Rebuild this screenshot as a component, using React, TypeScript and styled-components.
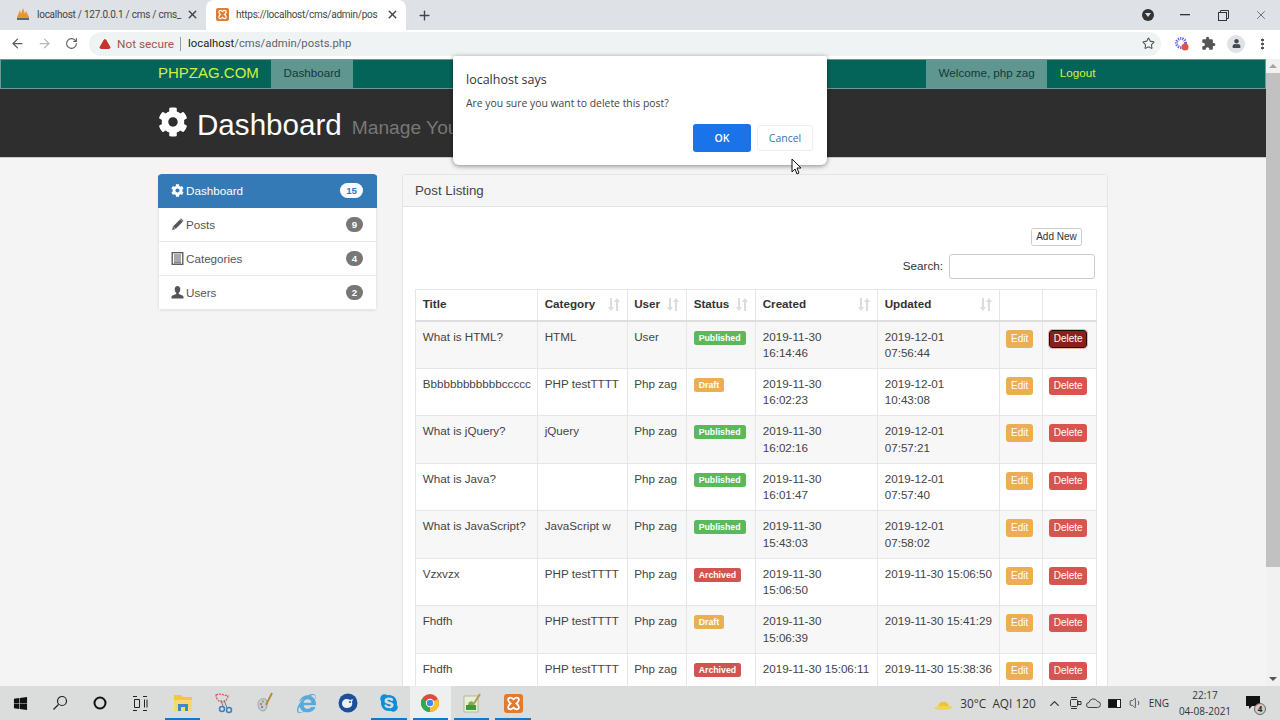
import styled, { createGlobalStyle } from "styled-components";
import { ArrowLeft, ArrowRight, RotateCw, Star, Plus, X, TriangleAlert, ChevronUp, Volume1 } from "lucide-react";
import { FaCog, FaInternetExplorer, FaSkype, FaWindows, FaUser } from "react-icons/fa";
import { MdExtension } from "react-icons/md";

const GlobalStyle = createGlobalStyle`
  html, body { margin: 0; padding: 0; height: 100%; overflow: hidden; }
  * { box-sizing: border-box; }
  body { font-family: "Liberation Sans", Arial, sans-serif; color: #333; }
`;

const uiFont = `"Open Sans", "Noto Sans", sans-serif`;
const chromeFont = `Roboto, "Open Sans", sans-serif`;

const Screen = styled.div`
  position: relative;
  width: 1280px;
  height: 720px;
  display: flex;
  flex-direction: column;
  overflow: hidden;
  background: #fff;
`;

/* browser chrome */
const TabStrip = styled.div`
  height: 30px;
  flex: none;
  display: flex;
  align-items: stretch;
  background: #dee1e6;
  font-family: ${chromeFont};
  font-size: 10px;
  letter-spacing: -0.25px;
  color: #444;
`;

const Tab = styled.div<{ $active?: boolean }>`
  width: ${(p) => (p.$active ? "200px" : "206px")};
  display: flex;
  align-items: center;
  gap: 7px;
  padding: 0 7px 2px ${(p) => (p.$active ? "10px" : "16px")};
  background: ${(p) => (p.$active ? "#fff" : "transparent")};
  border-radius: 8px 8px 0 0;
  & > svg { flex: none; }
`;

const TabTitle = styled.span`
  flex: 1;
  min-width: 0;
  white-space: nowrap;
`;

const NewTab = styled.div`
  width: 36px;
  display: flex;
  align-items: center;
  justify-content: center;
  color: #444;
`;

const WindowControls = styled.div`
  margin-left: auto;
  display: flex;
  align-items: center;
  color: #444;
`;

const ProfileDot = styled.div`
  width: 12px;
  height: 12px;
  margin-right: 12px;
  border-radius: 50%;
  background: #333;
  display: flex;
  align-items: center;
  justify-content: center;
  &::after {
    content: "";
    border-left: 3px solid transparent;
    border-right: 3px solid transparent;
    border-top: 4px solid #dee1e6;
  }
`;

const WinButton = styled.div`
  width: 38px;
  height: 26px;
  display: flex;
  align-items: center;
  justify-content: center;
`;

const Toolbar = styled.div`
  height: 29px;
  flex: none;
  display: flex;
  align-items: center;
  padding: 0 0 2px 10px;
  background: #fff;
  color: #555;
`;

const NavIcon = styled.div<{ $dim?: boolean }>`
  width: 27px;
  display: flex;
  justify-content: flex-start;
  color: ${(p) => (p.$dim ? "#b5b8bc" : "#5a5d60")};
`;

const ReloadIcon = styled(NavIcon)`
  margin-left: 1px;
  width: 25px;
`;

const UrlPill = styled.div`
  width: 1072px;
  height: 24px;
  margin-left: -1px;
  padding: 0 6px 0 10px;
  display: flex;
  align-items: center;
  border-radius: 12px;
  background: #f0f3f3;
  font-family: ${chromeFont};
  font-size: 11.3px;
  color: #5f6368;
`;

const NotSecure = styled.span`
  margin-left: 6px;
  font-size: 11.8px;
  color: #a8524e;
`;

const UrlBar = styled.span`
  width: 1px;
  height: 14px;
  margin: 0 7px 0 6px;
  background: #999;
`;

const UrlHost = styled.span`
  color: #222;
`;

const PillStar = styled.div`
  margin-left: auto;
  display: flex;
  color: #555;
`;

const ExtIcons = styled.div`
  display: flex;
  align-items: center;
  margin-left: 14px;
  gap: 11.5px;
`;

const Avatar = styled.div`
  width: 18px;
  height: 18px;
  border-radius: 50%;
  background: #dfe3e8;
  display: flex;
  align-items: center;
  justify-content: center;
  color: #45484c;
`;

const Kebab = styled.div`
  margin-left: 16px;
  width: 3px;
  height: 12px;
  background: radial-gradient(circle, #555 1.4px, transparent 1.6px) 0 0 / 3px 4px;
`;

/* page */
const Viewport = styled.div`
  flex: 1;
  min-height: 0;
  display: flex;
`;

const Page = styled.div`
  flex: 1;
  min-width: 0;
  overflow: hidden;
  background: #f4f4f4;
`;

const Scrollbar = styled.div`
  width: 14px;
  flex: none;
  display: flex;
  flex-direction: column;
  background: #f1f1f1;
`;

const ScrollArrow = styled.div<{ $down?: boolean }>`
  height: 14px;
  display: flex;
  align-items: center;
  justify-content: center;
  &::after {
    content: "";
    border-left: 4px solid transparent;
    border-right: 4px solid transparent;
    ${(p) => (p.$down ? "border-top: 4px solid #555;" : "border-bottom: 4px solid #a3a3a3;")}
  }
`;

const ScrollThumb = styled.div`
  height: 494px;
  background: #c1c1c1;
`;

const ScrollGap = styled.div`
  flex: 1;
`;

const NavBar = styled.div`
  height: 30px;
  padding-left: 157px;
  display: flex;
  background: #05645a;
  border: 1px solid #6d9a94;
  font-size: 11.67px;
`;

const Brand = styled.div`
  width: 113px;
  line-height: 26px;
  font-size: 15px;
  color: #cdf23f;
`;

const NavItem = styled.div<{ $active?: boolean; $push?: boolean }>`
  padding: 0 12.5px;
  line-height: 26px;
  margin-left: ${(p) => (p.$push ? "auto" : "0")};
  background: ${(p) => (p.$active ? "#5f9690" : "transparent")};
  color: ${(p) => (p.$active ? "#123a36" : "#cdf23f")};
`;

const NavEnd = styled.div`
  width: 157px;
`;

const Hero = styled.div`
  height: 69px;
  padding: 0 0 2px 158px;
  display: flex;
  align-items: center;
  background: #2e2e2e;
  border-bottom: 1px solid #c9c9c9;
  color: #fff;
`;

const HeroTitle = styled.h1`
  margin: 5px 0 0 9px;
  font-weight: 400;
  font-size: 29.6px;
`;

const HeroSub = styled.span`
  margin: 12px 0 0 10px;
  font-size: 19.2px;
  color: #777;
`;

const Content = styled.div`
  padding: 16px 0 0 158px;
  display: flex;
  align-items: flex-start;
  gap: 25px;
`;

const SideList = styled.div`
  width: 219px;
  border-radius: 4px;
  background: #fff;
  overflow: hidden;
  box-shadow: 0 1px 2px rgba(0, 0, 0, 0.08);
`;

const SideItem = styled.div<{ $active?: boolean }>`
  height: 34px;
  padding: 0 13px 0 12px;
  display: flex;
  align-items: center;
  gap: 2px;
  font-size: 11.67px;
  background: ${(p) => (p.$active ? "#337ab7" : "#fff")};
  color: ${(p) => (p.$active ? "#fff" : "#555")};
  border: 1px solid ${(p) => (p.$active ? "#337ab7" : "#e8e8e8")};
  border-width: 0 1px 1px 1px;
`;

const Count = styled.span<{ $active?: boolean }>`
  margin-left: auto;
  min-width: 17px;
  height: 15px;
  padding: 0 ${(p) => (p.$active ? "6px" : "4px")};
  border-radius: 8px;
  text-align: center;
  line-height: 15px;
  font-size: 9.7px;
  font-weight: 700;
  background: ${(p) => (p.$active ? "#fff" : "#777")};
  color: ${(p) => (p.$active ? "#337ab7" : "#fff")};
`;

const Panel = styled.div`
  width: 706px;
  height: 800px;
  background: #fff;
  border: 1px solid #e4e4e4;
  border-radius: 3px;
`;

const PanelHeading = styled.div`
  height: 32px;
  padding-left: 12px;
  display: flex;
  align-items: center;
  background: #f5f5f5;
  border-bottom: 1px solid #e2e2e2;
  font-size: 13.3px;
  color: #444;
`;

const PanelBody = styled.div`
  padding: 21px 12px 0 12px;
`;

const AddRow = styled.div`
  padding-right: 13px;
  display: flex;
  justify-content: flex-end;
`;

const AddButton = styled.div`
  width: 51px;
  height: 18px;
  line-height: 16px;
  text-align: center;
  border: 1px solid #ccc;
  border-radius: 2.5px;
  background: #fff;
  font-size: 10px;
`;

const SearchRow = styled.div`
  margin-top: 8px;
  display: flex;
  justify-content: flex-end;
  align-items: center;
  gap: 6px;
  font-size: 11.67px;
`;

const SearchLabel = styled.span`
  margin-bottom: 3px;
`;

const SearchInput = styled.input`
  width: 146px;
  height: 25px;
  border: 1px solid #ccc;
  border-radius: 3px;
  background: #fff;
`;

const Table = styled.table`
  width: 681px;
  margin-top: 10px;
  table-layout: fixed;
  border-collapse: collapse;
  font-size: 11.67px;
  line-height: 16.67px;
`;

const Th = styled.th`
  height: 31px;
  padding: 0 7px 0 6.7px;
  border: 1px solid #e6e6e6;
  border-bottom: 2px solid #ddd;
  text-align: left;
  vertical-align: middle;
`;

const ThInner = styled.div`
  display: flex;
  align-items: center;
  justify-content: space-between;
`;

const Td = styled.td`
  height: 47.5px;
  padding: 7.3px 6.7px 5.3px 6.7px;
  border: 1px solid #e6e6e6;
  vertical-align: top;
  white-space: pre;
  color: #444;
`;

const Tr = styled.tr<{ $striped: boolean }>`
  background: ${(p) => (p.$striped ? "#f7f7f7" : "#fff")};
`;

const labelColors: Record<string, string> = {
  Published: "#5cb85c",
  Draft: "#ebae52",
  Archived: "#d05450",
};

const Label = styled.span<{ $kind: string }>`
  display: inline-block;
  height: 14px;
  padding: 0 5px;
  margin-top: 2px;
  border-radius: 2.5px;
  line-height: 14px;
  vertical-align: top;
  font-size: 8.75px;
  font-weight: 700;
  color: #fff;
  background: ${(p) => labelColors[p.$kind]};
`;

const ActionButton = styled.div<{ $kind: "edit" | "delete"; $focused?: boolean }>`
  height: 18px;
  width: ${(p) => (p.$kind === "edit" ? "27px" : "38px")};
  margin-top: 1px;
  border-radius: 3px;
  text-align: center;
  line-height: 18px;
  font-size: 10px;
  color: #fff;
  background: ${(p) => (p.$focused ? "#8c1f1c" : p.$kind === "edit" ? "#ebae52" : "#d9534f")};
  ${(p) => p.$focused && "border: 1px solid #111; line-height: 16px; outline: 1px solid #e2b4b2;"}
`;

/* alert dialog */
const Dialog = styled.div`
  position: absolute;
  left: 453px;
  top: 56px;
  width: 374px;
  height: 109px;
  padding: 15px 14px 0 13px;
  background: #fff;
  border-radius: 2px 2px 6px 6px;
  box-shadow: 0 1px 5px rgba(0, 0, 0, 0.45);
  font-family: ${uiFont};
  color: #444;
`;

const DialogTitle = styled.div`
  font-size: 12.5px;
  line-height: 17px;
  color: #333;
`;

const DialogText = styled.div`
  margin-top: 8px;
  font-size: 10.4px;
  line-height: 15px;
`;

const DialogButtons = styled.div`
  margin-top: 13px;
  display: flex;
  justify-content: flex-end;
  align-items: center;
  gap: 6px;
`;

const OkButton = styled.div`
  width: 58px;
  height: 28px;
  border-radius: 3px;
  background: #1a73e8;
  color: #fff;
  text-align: center;
  line-height: 28px;
  font-size: 10.5px;
  font-weight: 600;
`;

const CancelButton = styled.div`
  width: 56px;
  height: 26px;
  border: 1px solid #eee;
  border-radius: 3px;
  color: #3f6fb3;
  text-align: center;
  line-height: 24px;
  font-size: 10.5px;
`;

const Cursor = styled.svg`
  position: absolute;
  left: 791px;
  top: 158px;
`;

/* taskbar */
const Taskbar = styled.div`
  height: 34px;
  flex: none;
  display: flex;
  align-items: stretch;
  background: #dadddc;
  font-family: ${uiFont};
  color: #222;
`;

const ShellSlot = styled.div`
  width: 40px;
  display: flex;
  align-items: center;
  justify-content: center;
`;

const AppGroup = styled.div`
  margin-left: 2px;
  display: flex;
`;

const AppSlot = styled.div<{ $open?: boolean; $active?: boolean }>`
  position: relative;
  width: 41.3px;
  display: flex;
  align-items: center;
  justify-content: center;
  background: ${(p) => (p.$active ? "#eef0f0" : "transparent")};
  &::after {
    content: "";
    display: ${(p) => (p.$open ? "block" : "none")};
    position: absolute;
    left: 3px;
    right: 3px;
    bottom: 0;
    height: 2px;
    background: #0f78c8;
  }
`;

const Tray = styled.div`
  margin-left: auto;
  padding-right: 5px;
  display: flex;
  align-items: center;
  font-size: 12px;
`;

const Weather = styled.span`
  margin-left: 5px;
  font-size: 11.8px;
  color: #333;
`;

const TrayIcon = styled.div<{ $gap: number }>`
  display: flex;
  margin-left: ${(p) => p.$gap}px;
  color: #333;
`;

const Lang = styled.span`
  margin-left: 6px;
  font-size: 10px;
  color: #333;
`;

const Clock = styled.div`
  width: 56px;
  margin-left: 8px;
  text-align: center;
  font-size: 10px;
  line-height: 16px;
  color: #333;
`;

const NotifyWrap = styled.div`
  position: relative;
  align-self: stretch;
  width: 42px;
  display: flex;
  align-items: center;
  justify-content: center;
`;

const NotifyBadge = styled.span`
  position: absolute;
  left: 21px;
  top: 17px;
  width: 12px;
  height: 12px;
  border-radius: 50%;
  border: 1px solid #666;
  background: #ccc;
  text-align: center;
  line-height: 10px;
  font-size: 8px;
  font-weight: 700;
  color: #222;
`;

const GearIcon = () => <FaCog size={13} />;

const PencilIcon = () => (
  <svg width="13" height="13" viewBox="0 0 13 13">
    <path d="M9 1.500 11.500 4 4.500 11 1 12 2 8.500z" fill="#555" />
    <path d="M2 8.500 4.500 11" stroke="#fff" strokeWidth=".6" />
    <path d="M10 .5 12.500 3l-.8.8L9.200 1.300z" fill="#555" />
  </svg>
);

const ListIcon = () => (
  <svg width="13" height="13" viewBox="0 0 12 13" fill="none">
    <rect x=".7" y=".7" width="10.600" height="11.600" stroke="#555" strokeWidth="1.300" />
    <path d="M2.500 3h7M2.500 5h7M2.500 7h7M2.500 9h7M2.500 10.800h7" stroke="#555" />
  </svg>
);

const BustIcon = () => (
  <svg width="13" height="13" viewBox="0 0 13 13">
    <path d="M6.500 0C4.700 0 3.700 1.300 3.700 3.200c0 1.500.7 3 1.500 3.600V8L1.500 9.500C.8 9.800.5 10.300.5 11v1.500h12V11c0-.7-.3-1.200-1-1.500L7.800 8V6.800c.8-.6 1.500-2.100 1.500-3.600C9.300 1.300 8.300 0 6.500 0z" fill="#555" />
  </svg>
);

const SortArrows = () => (
  <svg width="12" height="13" viewBox="0 0 12 13" fill="#dcdcdc">
    <path d="M2 0h2v9h2L3 13 0 9h2z" />
    <path d="M8 13h2V4h2L9 0 6 4h2z" />
  </svg>
);

const RestoreIcon = () => (
  <svg width="11" height="11" viewBox="0 0 11 11" fill="none" stroke="#333">
    <rect x=".5" y="2.500" width="8" height="8" />
    <path d="M2.500 2.500v-2h8v8h-2" />
  </svg>
);

const MinimizeIcon = () => (
  <svg width="10" height="2" viewBox="0 0 10 2">
    <rect width="10" height="1.300" fill="#333" />
  </svg>
);

const XamppIcon = ({ size }: { size: number }) => (
  <svg width={size} height={size} viewBox="0 0 16 16">
    <rect width="16" height="16" rx="2.500" fill="#e07b33" />
    <path d="M4 3.500c1.500-1 3 0 4 1 1-1 2.500-2 4-1 1 1 .5 3-1.500 4.500 2 1.500 2.500 3.500 1.500 4.500-1.500 1-3 0-4-1-1 1-2.500 2-4 1-1-1-.5-3 1.500-4.500C3.500 6.500 3 4.500 4 3.500z" fill="none" stroke="#fff" strokeWidth="1.500" />
  </svg>
);

const PmaIcon = () => (
  <svg width="14" height="14" viewBox="0 0 14 14">
    <path d="M1 10 4 3l1 4 2-6 2 6 1-3 3 6z" fill="#e8962e" />
    <rect x="1" y="10.500" width="12" height="2.500" fill="#666" />
  </svg>
);

const ChromeIcon = () => (
  <svg width="18" height="18" viewBox="0 0 18 18">
    <circle cx="9" cy="9" r="9" fill="#dd4b3e" />
    <path d="M9 9 1.200 4.500A9 9 0 0 0 9 18z" fill="#2da94f" />
    <path d="M9 9V18A9 9 0 0 0 17 5z" fill="#fbc02d" />
    <circle cx="9" cy="9" r="4.200" fill="#fff" />
    <circle cx="9" cy="9" r="3.200" fill="#3f88ee" />
  </svg>
);

const FolderIcon = () => (
  <svg width="20" height="18" viewBox="0 0 20 18">
    <path d="M1 1h7l2 2h9v14H1z" fill="#f4c542" />
    <rect x="1" y="6" width="18" height="11" fill="#f8d775" />
    <path d="M5 17V10h10v7h-3v-4H8v4z" fill="#3b8bc9" />
  </svg>
);

const SnipIcon = () => (
  <svg width="20" height="22" viewBox="0 0 20 22" fill="none">
    <path d="M2 3c4-2 8 0 12 1-1 4-3 6-6 6C5 10 2 7 2 3z" stroke="#d9534f" strokeDasharray="2 1" strokeWidth="1.200" />
    <circle cx="8" cy="17" r="2.500" stroke="#3b7fc4" strokeWidth="1.500" />
    <circle cx="15" cy="18" r="2.500" stroke="#3b7fc4" strokeWidth="1.500" />
    <path d="M9 14 7 8M13 16 10 8" stroke="#777" />
  </svg>
);

const PaintIcon = () => (
  <svg width="20" height="22" viewBox="0 0 20 22">
    <path d="M3 12c0-4 4-6 7-5 3 1 2 4 2 6s-1 6-4 6-5-3-5-7z" fill="#c9cdd0" stroke="#8e9496" strokeWidth=".8" />
    <circle cx="6" cy="12" r="1" fill="#d9534f" />
    <circle cx="8" cy="9.500" r="1" fill="#5cb85c" />
    <circle cx="7" cy="15" r="1" fill="#3b7fc4" />
    <path d="M17 1 11 13" stroke="#b58b3a" strokeWidth="2" />
  </svg>
);

const MailIcon = () => (
  <svg width="20" height="20" viewBox="0 0 20 20">
    <circle cx="10" cy="10" r="9.500" fill="#1d4f9c" />
    <path d="M4 11c0-3 2-5 5-5 1 0 2 .5 3 1l3-1-1 3c1 3-1 6-5 6-3 0-5-2-5-4z" fill="#eef2f6" />
    <circle cx="12" cy="9" r="1" fill="#1d4f9c" />
  </svg>
);

const NotepadIcon = () => (
  <svg width="20" height="22" viewBox="0 0 20 22">
    <rect x="2" y="4" width="14" height="16" fill="#e9efd9" stroke="#9aa88a" strokeWidth=".7" />
    <rect x="4" y="13" width="10" height="5" fill="#3f9a35" />
    <path d="M6 13c0-3 3-5 5-3s1 3 0 3z" fill="#6bb64a" />
    <path d="M18 2 11 13" stroke="#b89a4a" strokeWidth="2" />
  </svg>
);

const SunIcon = () => (
  <svg width="24" height="18" viewBox="0 0 24 18">
    <path d="M7 12a6 7 0 0 1 11 0z" fill="#f2c230" />
    <path d="M3 14c4-3 8-2 12-2s5 0 7 1c-2 2-5 3-9 3s-8 0-10-2z" fill="#eed35f" />
  </svg>
);

const rows = [
  ["What is HTML?", "HTML", "User", "Published", "2019-11-30\n16:14:46", "2019-12-01\n07:56:44"],
  ["Bbbbbbbbbbbbccccc", "PHP testTTTT", "Php zag", "Draft", "2019-11-30\n16:02:23", "2019-12-01\n10:43:08"],
  ["What is jQuery?", "jQuery", "Php zag", "Published", "2019-11-30\n16:02:16", "2019-12-01\n07:57:21"],
  ["What is Java?", "", "Php zag", "Published", "2019-11-30\n16:01:47", "2019-12-01\n07:57:40"],
  ["What is JavaScript?", "JavaScript w", "Php zag", "Published", "2019-11-30\n15:43:03", "2019-12-01\n07:58:02"],
  ["Vzxvzx", "PHP testTTTT", "Php zag", "Archived", "2019-11-30\n15:06:50", "2019-11-30 15:06:50"],
  ["Fhdfh", "PHP testTTTT", "Php zag", "Draft", "2019-11-30\n15:06:39", "2019-11-30 15:41:29"],
  ["Fhdfh", "PHP testTTTT", "Php zag", "Archived", "2019-11-30 15:06:11", "2019-11-30 15:38:36"],
];

const columns = [
  { title: "Title", width: 122 },
  { title: "Category", width: 89.5, sort: true },
  { title: "User", width: 59.5, sort: true },
  { title: "Status", width: 69, sort: true },
  { title: "Created", width: 122, sort: true },
  { title: "Updated", width: 121.5, sort: true },
  { title: "", width: 43 },
  { title: "", width: 54.5 },
];

const sideItems = [
  { name: "Dashboard", count: 15, icon: <GearIcon />, active: true },
  { name: "Posts", count: 9, icon: <PencilIcon /> },
  { name: "Categories", count: 4, icon: <ListIcon /> },
  { name: "Users", count: 2, icon: <BustIcon /> },
];

const App = () => {
  return (
    <Screen>
      <GlobalStyle />
      <TabStrip>
        <Tab>
          <PmaIcon />
          <TabTitle>localhost / 127.0.0.1 / cms / cms_</TabTitle>
          <X size={13} strokeWidth={2.5} />
        </Tab>
        <Tab $active>
          <XamppIcon size={13} />
          <TabTitle>https://localhost/cms/admin/pos</TabTitle>
          <X size={13} strokeWidth={2.5} />
        </Tab>
        <NewTab>
          <Plus size={15} strokeWidth={2.2} />
        </NewTab>
        <WindowControls>
          <ProfileDot />
          <WinButton>
            <MinimizeIcon />
          </WinButton>
          <WinButton>
            <RestoreIcon />
          </WinButton>
          <WinButton>
            <X size={14} strokeWidth={1.2} />
          </WinButton>
        </WindowControls>
      </TabStrip>

      <Toolbar>
        <NavIcon>
          <ArrowLeft size={15} />
        </NavIcon>
        <NavIcon $dim>
          <ArrowRight size={15} />
        </NavIcon>
        <ReloadIcon>
          <RotateCw size={13} />
        </ReloadIcon>
        <UrlPill>
          <TriangleAlert size={12} fill="#c5352c" color="#c5352c" />
          <NotSecure>Not secure</NotSecure>
          <UrlBar />
          <span>
            <UrlHost>localhost</UrlHost>/cms/admin/posts.php
          </span>
          <PillStar>
            <Star size={13} />
          </PillStar>
        </UrlPill>
        <ExtIcons>
          <svg width="14" height="14" viewBox="0 0 14 14">
            <circle cx="6" cy="6" r="4.500" fill="none" stroke="#6a62d8" strokeWidth="3" strokeDasharray="1.200 1" />
            <circle cx="10" cy="10" r="3.500" fill="#e3533f" />
          </svg>
          <MdExtension size={15} color="#555" />
          <Avatar>
            <FaUser size={9} />
          </Avatar>
        </ExtIcons>
        <Kebab />
      </Toolbar>

      <Viewport>
        <Page>
          <NavBar>
            <Brand>PHPZAG.COM</Brand>
            <NavItem $active>Dashboard</NavItem>
            <NavItem $active $push>
              Welcome, php zag
            </NavItem>
            <NavItem>Logout</NavItem>
            <NavEnd />
          </NavBar>
          <Hero>
            <FaCog size={30} />
            <HeroTitle>Dashboard</HeroTitle>
            <HeroSub>Manage Your Posts</HeroSub>
          </Hero>
          <Content>
            <SideList>
              {sideItems.map((item) => (
                <SideItem key={item.name} $active={item.active}>
                  {item.icon}
                  {item.name}
                  <Count $active={item.active}>{item.count}</Count>
                </SideItem>
              ))}
            </SideList>
            <Panel>
              <PanelHeading>Post Listing</PanelHeading>
              <PanelBody>
                <AddRow>
                  <AddButton>Add New</AddButton>
                </AddRow>
                <SearchRow>
                  <SearchLabel>Search:</SearchLabel>
                  <SearchInput />
                </SearchRow>
                <Table>
                  <colgroup>
                    {columns.map((c, i) => (
                      <col key={i} width={c.width} />
                    ))}
                  </colgroup>
                  <thead>
                    <tr>
                      {columns.map((c, i) => (
                        <Th key={i}>
                          <ThInner>
                            {c.title}
                            {c.sort && <SortArrows />}
                          </ThInner>
                        </Th>
                      ))}
                    </tr>
                  </thead>
                  <tbody>
                    {rows.map((r, i) => (
                      <Tr key={i} $striped={i % 2 === 0}>
                        <Td>{r[0]}</Td>
                        <Td>{r[1]}</Td>
                        <Td>{r[2]}</Td>
                        <Td>
                          <Label $kind={r[3]}>{r[3]}</Label>
                        </Td>
                        <Td>{r[4]}</Td>
                        <Td>{r[5]}</Td>
                        <Td>
                          <ActionButton $kind="edit">Edit</ActionButton>
                        </Td>
                        <Td>
                          <ActionButton $kind="delete" $focused={i === 0}>
                            Delete
                          </ActionButton>
                        </Td>
                      </Tr>
                    ))}
                  </tbody>
                </Table>
              </PanelBody>
            </Panel>
          </Content>
        </Page>
        <Scrollbar>
          <ScrollArrow />
          <ScrollThumb />
          <ScrollGap />
          <ScrollArrow $down />
        </Scrollbar>
      </Viewport>

      <Taskbar>
        <ShellSlot>
          <FaWindows size={15} color="#111" />
        </ShellSlot>
        <ShellSlot>
          <svg width="16" height="16" viewBox="0 0 16 16" fill="none" stroke="#222" strokeWidth="1.200">
            <circle cx="10" cy="6" r="4.500" />
            <path d="M6.500 9.500 1.500 14.500" />
          </svg>
        </ShellSlot>
        <ShellSlot>
          <svg width="14" height="14" viewBox="0 0 14 14" fill="none" stroke="#111" strokeWidth="2">
            <circle cx="7" cy="7" r="5.500" />
          </svg>
        </ShellSlot>
        <ShellSlot>
          <svg width="16" height="15" viewBox="0 0 16 15" fill="none" stroke="#222">
            <path d="M1 .5h4M1 14.500h4M11 .5h4M11 14.500h4M2.500 3.500h5v8h-5zM12.500 3.500v8M15 3.500v8" />
          </svg>
        </ShellSlot>
        <AppGroup>
          <AppSlot $open>
            <FolderIcon />
          </AppSlot>
          <AppSlot>
            <SnipIcon />
          </AppSlot>
          <AppSlot>
            <PaintIcon />
          </AppSlot>
          <AppSlot>
            <FaInternetExplorer size={19} color="#5aa9dc" />
          </AppSlot>
          <AppSlot>
            <MailIcon />
          </AppSlot>
          <AppSlot $open>
            <FaSkype size={20} color="#0a8fd8" />
          </AppSlot>
          <AppSlot $open $active>
            <ChromeIcon />
          </AppSlot>
          <AppSlot $open>
            <NotepadIcon />
          </AppSlot>
          <AppSlot $open>
            <XamppIcon size={19} />
          </AppSlot>
        </AppGroup>
        <Tray>
          <SunIcon />
          <Weather>30°C&nbsp; AQI 120</Weather>
          <TrayIcon $gap={11}>
            <ChevronUp size={15} />
          </TrayIcon>
          <TrayIcon $gap={6}>
            <svg width="14" height="14" viewBox="0 0 14 14" fill="none" stroke="#333">
              <rect x="2.500" y="3.500" width="7" height="7" rx="1" />
              <path d="M3 1.500h6M3 12.500h6M10 5.500h3v3h-3z" />
            </svg>
          </TrayIcon>
          <TrayIcon $gap={4}>
            <svg width="15" height="12" viewBox="0 0 15 12">
              <path d="M3 10.500a2.500 2.500 0 0 1 0-5 4.500 4.500 0 0 1 8.500-1 3 3 0 0 1 0 6z" fill="#d4d7d6" stroke="#444" />
            </svg>
          </TrayIcon>
          <TrayIcon $gap={7}>
            <svg width="14" height="9" viewBox="0 0 14 9">
              <rect x=".5" y=".5" width="12" height="8" fill="#fff" stroke="#222" />
              <rect x="1" y="1" width="8" height="7" fill="#111" />
            </svg>
          </TrayIcon>
          <TrayIcon $gap={7}>
            <Volume1 size={14} strokeWidth={1.3} />
          </TrayIcon>
          <Lang>ENG</Lang>
          <Clock>
            22:17
            <br />
            04-08-2021
          </Clock>
          <NotifyWrap>
            <svg width="16" height="14" viewBox="0 0 16 14">
              <path d="M0 0h14v10H6l-3 3v-3H0z" fill="#111" />
            </svg>
            <NotifyBadge>4</NotifyBadge>
          </NotifyWrap>
        </Tray>
      </Taskbar>

      <Dialog>
        <DialogTitle>localhost says</DialogTitle>
        <DialogText>Are you sure you want to delete this post?</DialogText>
        <DialogButtons>
          <OkButton>OK</OkButton>
          <CancelButton>Cancel</CancelButton>
        </DialogButtons>
      </Dialog>
      <Cursor width="12" height="17" viewBox="0 0 12 17">
        <path d="M1 1v13l3-3 2 5 2-1-2-5h4z" fill="#fff" stroke="#111" />
      </Cursor>
    </Screen>
  );
};

export default App;
